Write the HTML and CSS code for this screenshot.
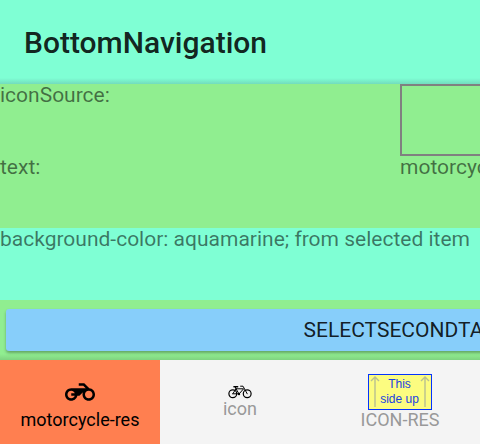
FILE: index.html
```html
<!DOCTYPE html>
<html lang="en">
<head>
<meta charset="utf-8">
<title>BottomNavigation</title>
<link rel="stylesheet" href="styles.css">
</head>
<body>
<header class="toolbar"><h1 class="title">BottomNavigation</h1></header>
<main class="content">
  <div class="sheet">
    <div class="row">
      <span class="cell">iconSource:</span>
      <span class="cell frame"></span>
    </div>
    <div class="row">
      <span class="cell">text:</span>
      <span class="cell">motorcycle-res</span>
    </div>
    <p class="note">background-color: aquamarine; from selected item</p>
    <div class="actions"><button class="action" type="button">SELECTSECONDTAB</button></div>
  </div>
</main>
<nav class="tabs">
  <button class="tab selected" type="button">
    <svg class="icon motor" viewBox="0 4 24 16" aria-hidden="true"><path d="M19.44 9.03L15.41 5H11v2h3.59l2 2H5c-2.8 0-5 2.2-5 5s2.2 5 5 5c2.46 0 4.45-1.69 4.9-4h1.65l2.77-2.77c-.21.54-.32 1.14-.32 1.77 0 2.8 2.2 5 5 5s5-2.2 5-5c0-2.65-1.97-4.77-4.56-4.97zM7.82 15C7.4 16.15 6.28 17 5 17c-1.63 0-3-1.37-3-3s1.37-3 3-3c1.28 0 2.4.85 2.82 2H5v2h2.82zM19 17c-1.66 0-3-1.34-3-3s1.34-3 3-3 3 1.34 3 3-1.34 3-3 3z"/></svg>
    <span>motorcycle-res</span>
  </button>
  <button class="tab" type="button">
    <svg class="icon bike" viewBox="0 0 24 14" aria-hidden="true">
      <g fill="none" stroke="#000" stroke-linecap="round">
        <circle cx="4.8" cy="8.8" r="3.9" stroke-width="1.2"/>
        <circle cx="19.2" cy="8.8" r="3.9" stroke-width="1.2"/>
        <path stroke-width="1" d="M4.8 8.8 8 3.8h7.6L11 9 8 3.8M4.8 8.8H11M19.2 8.8 15 1.2h-2.4M8 3.8 7.4 2.2"/>
        <path stroke-width="1.6" d="M6 1.8h3.6"/>
      </g>
      <circle cx="11" cy="9" r="1.2"/>
    </svg>
    <span>icon</span>
  </button>
  <button class="tab" type="button">
    <svg class="icon box" viewBox="0 0 64 36" aria-hidden="true">
      <rect x=".5" y=".5" width="63" height="35" fill="#fcfc80" stroke="#0433ff"/>
      <path d="M7 33V4M3 7l4-4 4 4M57 33V4M53 7l4-4 4 4" fill="none" stroke="#b9bf91" stroke-width="1.4"/>
      <text x="31.5" y="14">This</text>
      <text x="31.5" y="29">side up</text>
    </svg>
    <span>ICON-RES</span>
  </button>
</nav>
</body>
</html>
```
FILE: styles.css
```css
* { box-sizing: border-box; }
body {
  margin: 0;
  min-height: 100vh;
  display: flex;
  flex-direction: column;
  overflow: hidden;
  background: lightgreen;
  font-family: Roboto, sans-serif;
  font-size: 21px;
  line-height: 22px;
  color: rgba(0, 0, 0, 0.54);
}
.toolbar {
  display: flex;
  align-items: center;
  height: 84px;
  padding: 2px 24px 0;
  background: linear-gradient(to top, #72dcbe, aquamarine 6px);
}
.title {
  margin: 0;
  font-size: 30px;
  line-height: 36px;
  font-weight: 500;
  color: rgba(0, 0, 0, 0.87);
}
.content { flex: 1; overflow: hidden; }
.sheet { width: 800px; }
.row { display: grid; grid-template-columns: 1fr 1fr; height: 72px; }
.frame { border: 2px solid gray; }
.note { margin: 0; height: 72px; background: aquamarine; }
.actions {
  padding: 9px 6px;
  background: linear-gradient(to top, #80d380, lightgreen 6px);
}
.action {
  display: block;
  width: 100%;
  height: 42px;
  padding: 0;
  border: 0;
  border-radius: 3px;
  background: lightskyblue;
  box-shadow: 0 2px 3px rgba(0, 0, 0, 0.3);
  font: inherit;
  color: rgba(0, 0, 0, 0.87);
}
.tabs { display: grid; grid-template-columns: repeat(3, 1fr); height: 84px; background: #f4f4f4; }
.tab {
  display: flex;
  flex-direction: column;
  align-items: center;
  justify-content: center;
  padding: 0;
  border: 0;
  background: none;
  font: inherit;
  font-size: 18px;
  line-height: 20px;
  color: #999;
}
.selected { background: coral; color: #000; }
.icon { display: block; }
.motor { width: 30px; height: 20px; margin: 8px 0; }
.bike { width: 24px; height: 14px; }
.box { width: 64px; height: 36px; }
.box text {
  font: 12px "Liberation Sans", sans-serif;
  text-anchor: middle;
  fill: #1a43e0;
}
```
